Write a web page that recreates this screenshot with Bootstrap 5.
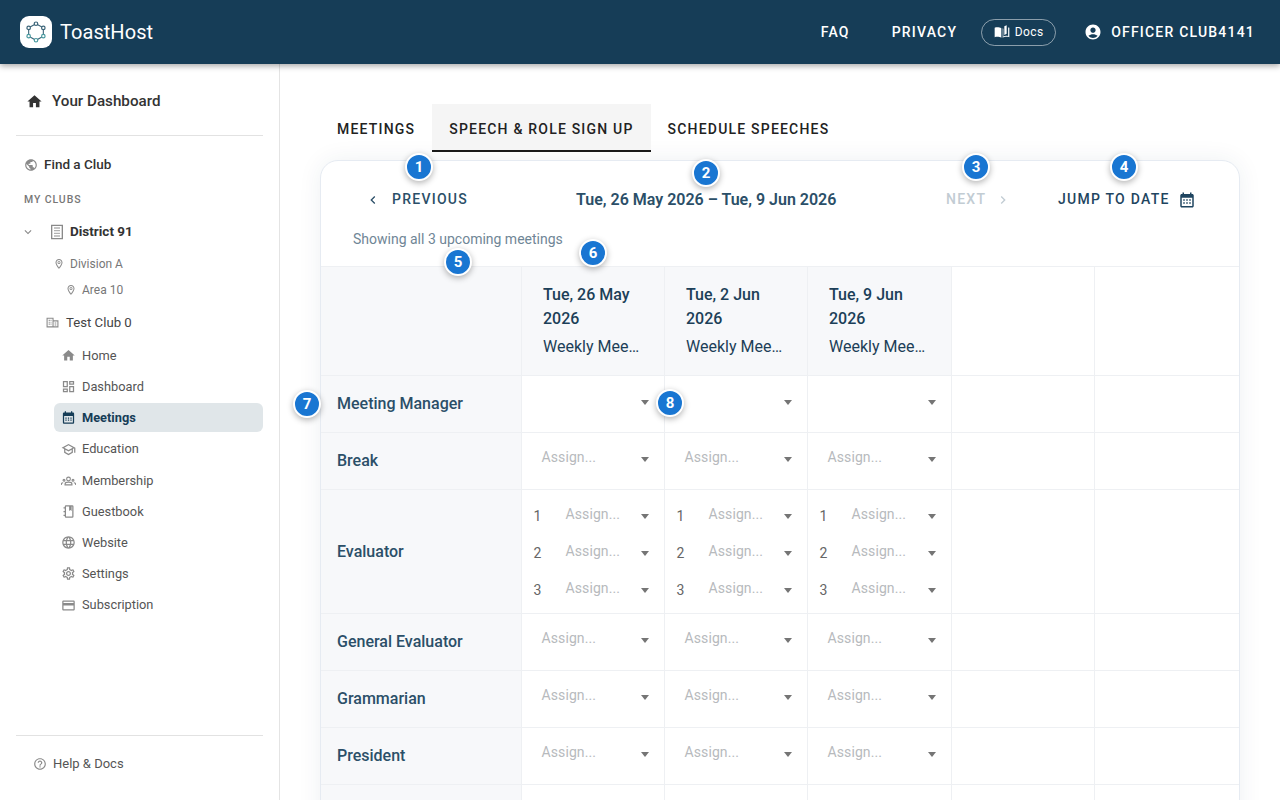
<!DOCTYPE html>
<html lang="en">
<head>
  <meta charset="UTF-8" />
  <meta name="viewport" content="width=device-width, initial-scale=1.0"/>
  <title>ToastHost - Speech & Role Sign Up</title>
  <link href="https://cdn.jsdelivr.net/npm/bootstrap@5.3.3/dist/css/bootstrap.min.css" rel="stylesheet">
  <style>
    body { font-family: Roboto, "Liberation Sans", sans-serif; height: 800px; overflow: hidden; color: #333; position: relative; }
    svg { fill: currentColor; flex-shrink: 0; display: block; }
    .topbar { height: 64px; background: #163d57; color: #fff; box-shadow: 0 2px 6px rgba(0,0,0,.35); padding: 0 25px 0 20px; position: relative; z-index: 2; }
    .logo-box { width: 32px; height: 32px; background: #fff; border-radius: 9px; }
    .brand-name { font-size: 20px; letter-spacing: .05px; margin-left: 8px; }
    .top-link { font-size: 14px; font-weight: 500; letter-spacing: 1.2px; padding-top: 1px; }
    .faq-link { margin-right: 42px; }
    .docs-pill { width: 75px; height: 27px; border: 1px solid rgba(255,255,255,.5); border-radius: 14px; font-size: 12px; letter-spacing: .4px; gap: 5px; margin: 0 28px 0 24px; }
    .user-ic { margin-right: 9px; }
    .side { width: 280px; height: 736px; border-right: 1px solid #e4e4e4; padding: 0 16px; flex-shrink: 0; }
    .side-rule { border-top: 1px solid #e2e2e2; }
    .dash-link { height: 71px; padding: 3px 0 0 10px; gap: 9px; font-size: 15.2px; font-weight: 500; color: #333; }
    .find-link { height: 27px; margin-top: 15px; padding-left: 8px; gap: 6px; font-size: 13.5px; font-weight: 500; color: #333; }
    .side-head { font-size: 10.5px; font-weight: 500; letter-spacing: .9px; color: #777; padding-left: 8px; margin-top: 14px; height: 16px; line-height: 16px; }
    .district-row { height: 31px; margin-top: 8px; padding-left: 5px; font-size: 13.5px; font-weight: 700; color: #333; }
    .tower-ic { margin: 0 5px 0 14px; }
    .grey-ic { color: #8a8a8a; }
    .tree-row { height: 26px; font-size: 12px; color: #777; gap: 5px; }
    .tree-a { padding-left: 37px; margin-top: 4px; }
    .tree-b { padding-left: 49px; }
    .club-row { height: 31px; margin-top: 4px; padding-left: 30px; font-size: 13.2px; color: #444; gap: 7px; }
    .club-menu { margin-top: 3px; }
    .club-item { height: 29px; margin: 0 0 2.2px 38px; padding-left: 7px; gap: 6px; font-size: 12.8px; color: #555; border-radius: 6px; }
    .club-item.is-on { background: #e0e6e9; color: #163d57; font-weight: 700; }
    .help-row { height: 56px; margin-bottom: 8px; padding-left: 17px; gap: 6px; font-size: 13px; color: #555; }
    .content-area { padding: 40px 40px 0; flex: 1; min-width: 0; }
    .tab-row { height: 48px; margin-bottom: 8px; }
    .tab-item { padding: 0 17px; font-size: 14px; font-weight: 500; letter-spacing: 1.2px; color: #222; height: 48px; line-height: 50px; }
    .tab-item.is-on { background: #f5f5f5; border-bottom: 2px solid #1a1a1a; }
    .sheet { border: 1px solid #e6ebf2; border-radius: 18px 18px 0 0; background: #fff; box-shadow: 0 0 24px rgba(30,50,80,.07); overflow: hidden; }
    .sheet-head { height: 105px; padding-top: 27px; }
    .pager-row { height: 23px; font-size: 14px; font-weight: 500; letter-spacing: 1.25px; color: #2b4f68; }
    .pager-prev { margin-left: 44px; width: 211px; gap: 11px; }
    .pager-date { width: 262px; font-size: 16px; font-weight: 600; letter-spacing: 0; white-space: nowrap; }
    .pager-next { margin-left: 108px; width: 112px; gap: 9px; color: #c2ccd3; }
    .pager-jump { gap: 8px; color: #1f4560; }
    .showing-note { font-size: 14px; color: #6f8696; margin: 20px 0 0 32px; line-height: 16px; }
    .role-table { table-layout: fixed; width: 918px; border-collapse: collapse; }
    .role-table td, .role-table th { border: 1px solid #eef0f3; padding: 0; font-weight: 400; vertical-align: middle; }
    .role-table tr > :first-child { border-left: 0; }
    .role-table tr > :last-child { border-right: 0; }
    .role-label { background: #f7f8fa; font-size: 16px; font-weight: 500 !important; color: #2b4f68; padding-left: 16px !important; }
    .date-cell { background: #f7f8fa; height: 109px; padding: 16px 22px 0 21.5px !important; font-size: 16px; line-height: 24px; color: #1c3f58; vertical-align: top !important; }
    .date-title { font-weight: 500; padding-right: 2px; }
    .date-sub { white-space: nowrap; overflow: hidden; text-overflow: ellipsis; margin-top: 4px; }
    .multi-cell { padding: 8px 0 4px !important; }
    .slot-cell { padding-bottom: 3px !important; }
    .slot-row { height: 37px; padding-left: 12px; }
    .slot-num { width: 32px; font-size: 14px; color: #666; }
    .slot-pick { flex: 1; height: 37px; padding: 0 15px 0 20px; font-size: 14px; color: #b7babd; letter-spacing: .1px; }
    .slot-pick.has-num { padding-left: 0; }
    .drop-tri { width: 0; height: 0; border-left: 4.5px solid transparent; border-right: 4.5px solid transparent; border-top: 5px solid #757575; margin-left: auto; }
    .step-dot { position: absolute; width: 28px; height: 28px; border-radius: 50%; background: #1976d2; border: 2px solid #fff; color: #fff; font-size: 15px; font-weight: 700; box-shadow: 0 2px 6px rgba(0,0,0,.3); z-index: 3; }
  </style>
</head>
<body>
  <svg width="0" height="0" class="position-absolute">
    <symbol id="i-home" viewBox="0 0 24 24"><path d="M10 20v-6h4v6h5v-8h3L12 3 2 12h3v8z"/></symbol>
    <symbol id="i-globe" viewBox="0 0 24 24"><path d="M12 2C6.48 2 2 6.48 2 12s4.48 10 10 10 10-4.48 10-10S17.52 2 12 2zm-1 17.93c-3.95-.49-7-3.85-7-7.93 0-.62.08-1.21.21-1.79L9 15v1c0 1.1.9 2 2 2v1.93zm6.9-2.54c-.26-.81-1-1.39-1.9-1.39h-1v-3c0-.55-.45-1-1-1H8v-2h2c.55 0 1-.45 1-1V7h2c1.1 0 2-.9 2-2v-.41c2.93 1.19 5 4.06 5 7.41 0 2.08-.8 3.97-2.1 5.39z"/></symbol>
    <symbol id="i-down" viewBox="0 0 24 24"><path d="M16.59 8.59 12 13.17 7.41 8.59 6 10l6 6 6-6z"/></symbol>
    <symbol id="i-left" viewBox="0 0 24 24"><path d="M15.41 7.41 14 6l-6 6 6 6 1.41-1.41L10.83 12z"/></symbol>
    <symbol id="i-right" viewBox="0 0 24 24"><path d="M10 6 8.59 7.41 13.17 12l-4.58 4.59L10 18l6-6z"/></symbol>
    <symbol id="i-user" viewBox="0 0 24 24"><path d="M12 2C6.48 2 2 6.48 2 12s4.48 10 10 10 10-4.48 10-10S17.52 2 12 2zm0 4c1.93 0 3.5 1.57 3.5 3.5S13.93 13 12 13s-3.5-1.57-3.5-3.5S10.07 6 12 6zm0 14c-2.03 0-4.43-.82-6.14-2.88C7.55 15.8 9.68 15 12 15s4.45.8 6.14 2.12C16.43 19.18 14.03 20 12 20z"/></symbol>
    <symbol id="i-cal" viewBox="0 0 24 24"><path d="M19 4h-1V2h-2v2H8V2H6v2H5c-1.1 0-2 .9-2 2v14c0 1.1.9 2 2 2h14c1.1 0 2-.9 2-2V6c0-1.1-.9-2-2-2zm0 16H5V9h14v11zM7 11h2v2H7zm4 0h2v2h-2zm4 0h2v2h-2zm-8 4h2v2H7zm4 0h2v2h-2zm4 0h2v2h-2z"/></symbol>
    <symbol id="i-book" viewBox="0 0 24 24"><path d="M11 6.500C9.500 5.300 7 5 5 5c-1.400 0-2.800.2-4 .7V20c1.200-.5 2.600-.7 4-.7 2 0 4.500.4 6 1.500V6.500zM13 6.500v14.300c1.500-1.100 4-1.500 6-1.500 1.400 0 2.800.2 4 .7V5.700c-.6-.3-1.200-.4-1.800-.5V18c-1-.3-2-.4-3-.4-1.500 0-3.100.4-4.200 1.100V7.300l-1 -.8z"/><path d="M15.500 3.500 19 2v12.500l-3.500 2z"/></symbol>
    <symbol id="i-pin" viewBox="0 0 24 24"><path d="M12 2C8.130 2 5 5.130 5 9c0 5.250 7 13 7 13s7-7.750 7-13c0-3.870-3.130-7-7-7zm0 2c2.760 0 5 2.240 5 5 0 2.880-2.880 7.190-5 9.880C9.920 16.210 7 11.850 7 9c0-2.760 2.240-5 5-5z"/><path d="M12 6a3 3 0 1 1 0 6 3 3 0 0 1 0-6zm0 1.600a1.400 1.400 0 1 0 0 2.800 1.400 1.400 0 0 0 0-2.800z"/></symbol>
    <symbol id="i-tower" viewBox="0 0 24 24"><path d="M3 1h18v22H3V1zm2 2v18h14V3H5zm3 2h2v2H8zm3 0h2v2h-2zm3 0h2v2h-2zM8 9h2v2H8zm3 0h2v2h-2zm3 0h2v2h-2zm-6 4h2v2H8zm3 0h2v2h-2zm3 0h2v2h-2zm-6 4h2v2H8zm3 0h2v2h-2zm3 0h2v2h-2z"/></symbol>
    <symbol id="i-club" viewBox="0 0 24 24"><path d="M1 3h13v5h9v13H1V3zm2 2v14h9V5H3zm11 5v9h7v-9h-7zM5 7h2v2H5zm3.500 0H10v2H8.500zM5 10.500h2v2H5zm3.500 0H10v2H8.500zM5 14h2v2H5zm3.500 0H10v2H8.500zm7.500-2h3v2h-3zm0 3.500h3v2h-3z"/></symbol>
    <symbol id="i-dash" viewBox="0 0 24 24"><path d="M19 5v2h-4V5h4M9 5v6H5V5h4m10 8v6h-4v-6h4M9 17v2H5v-2h4M21 3h-8v6h8V3zM11 3H3v10h8V3zm10 8h-8v10h8V11zm-10 4H3v6h8v-6z"/></symbol>
    <symbol id="i-event" viewBox="0 0 24 24"><path d="M19 4h-1V2h-2v2H8V2H6v2H5c-1.100 0-2 .9-2 2v14c0 1.100.9 2 2 2h14c1.100 0 2-.9 2-2V6c0-1.100-.9-2-2-2zm0 16H5V9.500h14V20zM7 12h2v1.800H7zm4 0h2v1.800h-2zm4 0h2v1.800h-2zm-8 3.200h2V17H7zm4 0h2V17h-2zm4 0h2V17h-2z"/></symbol>
    <symbol id="i-school" viewBox="0 0 24 24"><path d="M12 3 1 9l4 2.180v6L12 21l7-3.820v-6l2-1.090V17h2V9L12 3zm6.820 6L12 12.720 5.180 9 12 5.280 18.820 9zM17 15.990l-5 2.730-5-2.730v-3.720L12 15l5-2.730v3.720z"/></symbol>
    <symbol id="i-people" viewBox="0 0 24 24"><g fill="none" stroke="currentColor" stroke-width="1.800"><circle cx="12" cy="9.500" r="3"/><path d="M6.500 19v-1.500c0-2 2.500-3 5.500-3s5.500 1 5.500 3V19z"/><circle cx="4.800" cy="11.500" r="1.500"/><circle cx="19.200" cy="11.500" r="1.500"/><path d="M.5 19v-1c0-1.300 1.300-2.300 3-2.500M23.500 19v-1c0-1.300-1.300-2.300-3-2.500"/></g></symbol>
    <symbol id="i-note" viewBox="0 0 24 24"><path d="M8 2h10a2 2 0 0 1 2 2v16a2 2 0 0 1-2 2H8a2 2 0 0 1-2-2v-1H4v-2h2v-4H4v-2h2V7H4V5h2V4a2 2 0 0 1 2-2zm0 2v16h10V4h-1v7l-2-1.300L13 11V4H8z"/></symbol>
    <symbol id="i-web" viewBox="0 0 24 24"><path d="M11.990 2C6.470 2 2 6.480 2 12s4.470 10 9.990 10C17.520 22 22 17.520 22 12S17.520 2 11.990 2zm6.930 6h-2.950a15.650 15.650 0 0 0-1.380-3.560A8.030 8.030 0 0 1 18.920 8zM12 4.040c.83 1.200 1.480 2.530 1.910 3.960h-3.820c.43-1.430 1.080-2.760 1.910-3.960zM4.260 14C4.100 13.360 4 12.690 4 12s.1-1.360.26-2h3.380c-.08.660-.14 1.320-.14 2s.06 1.340.14 2H4.260zm.82 2h2.950c.32 1.250.78 2.450 1.380 3.560A7.987 7.987 0 0 1 5.080 16zm2.950-8H5.080a7.987 7.987 0 0 1 4.330-3.560A15.650 15.650 0 0 0 8.030 8zM12 19.960c-.83-1.200-1.480-2.530-1.910-3.960h3.820c-.43 1.430-1.080 2.760-1.910 3.960zM14.340 14H9.660c-.09-.660-.16-1.320-.16-2s.07-1.350.16-2h4.680c.09.650.16 1.320.16 2s-.07 1.340-.16 2zm.25 5.560c.6-1.110 1.060-2.310 1.380-3.560h2.950a8.030 8.030 0 0 1-4.330 3.560zM16.360 14c.08-.660.14-1.320.14-2s-.06-1.340-.14-2h3.380c.16.640.26 1.310.26 2s-.1 1.360-.26 2h-3.380z"/></symbol>
    <symbol id="i-gear" viewBox="0 0 24 24"><path d="M19.430 12.980c.04-.32.07-.64.07-.98 0-.34-.03-.66-.07-.98l2.110-1.650c.19-.15.24-.42.12-.64l-2-3.460c-.09-.16-.26-.25-.44-.25-.06 0-.12.01-.17.03l-2.490 1c-.52-.4-1.080-.73-1.690-.98l-.38-2.650C14.460 2.180 14.250 2 14 2h-4c-.25 0-.46.18-.49.42l-.38 2.650c-.61.25-1.170.59-1.690.98l-2.490-1c-.06-.02-.12-.03-.18-.03-.17 0-.34.09-.43.25l-2 3.460c-.13.22-.07.49.12.64l2.110 1.650c-.04.32-.07.65-.07.98 0 .33.03.66.07.98l-2.110 1.650c-.19.15-.24.42-.12.64l2 3.460c.09.16.26.25.44.25.06 0 .12-.01.17-.03l2.490-1c.52.4 1.080.73 1.690.98l.38 2.650c.03.24.24.42.49.42h4c.25 0 .46-.18.49-.42l.38-2.650c.61-.25 1.170-.59 1.690-.98l2.490 1c.06.02.12.03.18.03.17 0 .34-.09.43-.25l2-3.460c.12-.22.07-.49-.12-.64l-2.110-1.650zm-1.980-1.710c.04.31.05.52.05.73 0 .21-.02.43-.05.73l-.14 1.130.89.7 1.080.84-.7 1.210-1.270-.51-1.040-.42-.9.680c-.43.32-.84.56-1.250.73l-1.060.43-.16 1.130-.2 1.350h-1.400l-.19-1.350-.16-1.130-1.060-.43c-.43-.18-.83-.41-1.230-.71l-.91-.7-1.060.43-1.270.51-.7-1.210 1.080-.84.89-.7-.14-1.130c-.03-.31-.05-.54-.05-.74s.02-.43.05-.73l.14-1.130-.89-.7-1.080-.84.7-1.210 1.270.51 1.040.42.9-.68c.43-.32.84-.56 1.250-.73l1.060-.43.16-1.130.2-1.350h1.390l.19 1.350.16 1.130 1.060.43c.43.18.83.41 1.230.71l.91.7 1.060-.43 1.270-.51.7 1.210-1.070.85-.89.7.14 1.130zM12 8c-2.210 0-4 1.790-4 4s1.790 4 4 4 4-1.790 4-4-1.790-4-4-4zm0 6c-1.100 0-2-.9-2-2s.9-2 2-2 2 .9 2 2-.9 2-2 2z"/></symbol>
    <symbol id="i-card" viewBox="0 0 24 24"><path d="M20 4H4c-1.110 0-2 .89-2 2v12c0 1.110.89 2 2 2h16c1.110 0 2-.89 2-2V6c0-1.110-.89-2-2-2zm0 14H4v-6h16v6zm0-10H4V6h16v2z"/></symbol>
    <symbol id="i-help" viewBox="0 0 24 24"><path d="M11 18h2v-2h-2v2zm1-16C6.480 2 2 6.480 2 12s4.480 10 10 10 10-4.480 10-10S17.520 2 12 2zm0 18c-4.410 0-8-3.590-8-8s3.590-8 8-8 8 3.590 8 8-3.590 8-8 8zm0-14c-2.210 0-4 1.790-4 4h2c0-1.100.9-2 2-2s2 .9 2 2c0 2-3 1.750-3 5h2c0-2.250 3-2.500 3-5 0-2.210-1.790-4-4-4z"/></symbol>
  </svg>

  <header class="topbar d-flex align-items-center">
    <div class="logo-box d-flex align-items-center justify-content-center">
      <svg width="22" height="22" viewBox="0 0 24 24">
        <polygon points="12,3 20,7.500 20,16.500 12,21 4,16.500 4,7.500" fill="none" stroke="#3b6478" stroke-width="1.200"/>
        <g fill="#fff" stroke-width="1.300">
          <circle cx="12" cy="3" r="1.900" stroke="#3b6478"/><circle cx="20" cy="7.500" r="1.900" stroke="#3b6478"/><circle cx="4" cy="7.500" r="1.900" stroke="#3b6478"/>
          <circle cx="20" cy="16.500" r="1.900" stroke="#4a9aa0"/><circle cx="12" cy="21" r="1.900" stroke="#4a9aa0"/><circle cx="4" cy="16.500" r="1.900" stroke="#4a9aa0"/>
        </g>
      </svg>
    </div>
    <span class="brand-name">ToastHost</span>
    <div class="ms-auto d-flex align-items-center">
      <span class="top-link faq-link">FAQ</span>
      <span class="top-link">PRIVACY</span>
      <span class="docs-pill d-flex align-items-center justify-content-center"><svg width="16" height="16"><use href="#i-book"/></svg>Docs</span>
      <svg width="18" height="18" class="user-ic"><use href="#i-user"/></svg>
      <span class="top-link">OFFICER CLUB4141</span>
    </div>
  </header>

  <div class="d-flex">
    <aside class="side d-flex flex-column">
      <div class="dash-link d-flex align-items-center"><svg width="17" height="17"><use href="#i-home"/></svg>Your Dashboard</div>
      <div class="side-rule"></div>
      <div class="find-link d-flex align-items-center"><svg width="14" height="14" class="grey-ic"><use href="#i-globe"/></svg>Find a Club</div>
      <div class="side-head">MY CLUBS</div>
      <div class="district-row d-flex align-items-center">
        <svg width="14" height="14" class="grey-ic"><use href="#i-down"/></svg>
        <svg width="16" height="16" class="grey-ic tower-ic"><use href="#i-tower"/></svg>District 91
      </div>
      <div class="tree-row tree-a d-flex align-items-center"><svg width="12" height="12" class="grey-ic"><use href="#i-pin"/></svg>Division A</div>
      <div class="tree-row tree-b d-flex align-items-center"><svg width="12" height="12" class="grey-ic"><use href="#i-pin"/></svg>Area 10</div>
      <div class="club-row d-flex align-items-center"><svg width="13" height="13" class="grey-ic"><use href="#i-club"/></svg>Test Club 0</div>
      <div id="club-menu" class="club-menu"></div>
      <div class="mt-auto side-rule"></div>
      <div class="help-row d-flex align-items-center"><svg width="14" height="14" class="grey-ic"><use href="#i-help"/></svg>Help &amp; Docs</div>
    </aside>

    <main class="content-area">
      <div class="tab-row d-flex">
        <div class="tab-item">MEETINGS</div>
        <div class="tab-item is-on">SPEECH &amp; ROLE SIGN UP</div>
        <div class="tab-item">SCHEDULE SPEECHES</div>
      </div>
      <section class="sheet">
        <div class="sheet-head">
          <div class="pager-row d-flex align-items-center">
            <div class="pager-prev d-flex align-items-center"><svg width="16" height="16"><use href="#i-left"/></svg>PREVIOUS</div>
            <div class="pager-date">Tue, 26 May 2026 – Tue, 9 Jun 2026</div>
            <div class="pager-next d-flex align-items-center">NEXT<svg width="16" height="16"><use href="#i-right"/></svg></div>
            <div class="pager-jump d-flex align-items-center">JUMP TO DATE<svg width="18" height="18"><use href="#i-cal"/></svg></div>
          </div>
          <div class="showing-note">Showing all 3 upcoming meetings</div>
        </div>
        <table class="role-table">
          <colgroup><col style="width:200px"><col style="width:143px"><col style="width:143px"><col style="width:144px"><col style="width:143px"><col style="width:145px"></colgroup>
          <tbody id="role-body"></tbody>
        </table>
      </section>
    </main>
  </div>

  <script>
    const clubItems = [
      ["Home", "i-home"], ["Dashboard", "i-dash"], ["Meetings", "i-event", true], ["Education", "i-school"],
      ["Membership", "i-people"], ["Guestbook", "i-note"], ["Website", "i-web"], ["Settings", "i-gear"], ["Subscription", "i-card"]
    ];
    document.getElementById("club-menu").innerHTML = clubItems.map(([label, icon, on]) => `
      <div class="club-item d-flex align-items-center ${on ? "is-on" : ""}">
        <svg width="15" height="15" class="${on ? "" : "grey-ic"}"><use href="#${icon}"/></svg>${label}
      </div>`).join("");

    const meetings = ["Tue, 26 May 2026", "Tue, 2 Jun 2026", "Tue, 9 Jun 2026"];
    const roles = [
      { name: "Meeting Manager", filled: true },
      { name: "Break" },
      { name: "Evaluator", slots: 3 },
      { name: "General Evaluator" },
      { name: "Grammarian" },
      { name: "President" }
    ];

    function pick(text, numbered) {
      return `<div class="slot-pick d-flex align-items-center ${numbered ? "has-num" : ""}"><span class="pb-1">${text}</span><i class="drop-tri"></i></div>`;
    }

    let rows = `<tr><th class="role-label"></th>` +
      meetings.map(m => `<th class="date-cell"><div class="date-title">${m}</div><div class="date-sub">Weekly Meeting</div></th>`).join("") +
      `<th></th><th></th></tr>`;
    roles.forEach(role => {
      const cell = meetings.map(() => {
        if (role.slots) {
          let inner = "";
          for (let n = 1; n <= role.slots; n++) {
            inner += `<div class="slot-row d-flex align-items-center"><span class="slot-num">${n}</span>${pick("Assign...", true)}</div>`;
          }
          return `<td class="multi-cell">${inner}</td>`;
        }
        return `<td class="slot-cell">${pick(role.filled ? "" : "Assign...")}</td>`;
      }).join("");
      const h = role.slots ? 123 : 57;
      rows += `<tr style="height:${h}px"><td class="role-label">${role.name}</td>${cell}<td></td><td></td></tr>`;
    });
    // next row only starts at the fold
    rows += `<tr style="height:57px"><td class="role-label"></td><td></td><td></td><td></td><td></td><td></td></tr>`;
    document.getElementById("role-body").innerHTML = rows;

    // numbered help markers: centre x, centre y
    const steps = [[419, 167], [706, 173], [976, 167], [1124, 167], [458, 262], [593, 253], [307, 404], [670, 403]];
    steps.forEach(([x, y], i) => {
      const dot = document.createElement("div");
      dot.className = "step-dot d-flex align-items-center justify-content-center";
      dot.style.left = (x - 14) + "px";
      dot.style.top = (y - 14) + "px";
      dot.textContent = i + 1;
      document.body.appendChild(dot);
    });
  </script>
  <script src="https://cdn.jsdelivr.net/npm/bootstrap@5.3.3/dist/js/bootstrap.bundle.min.js"></script>
</body>
</html>
